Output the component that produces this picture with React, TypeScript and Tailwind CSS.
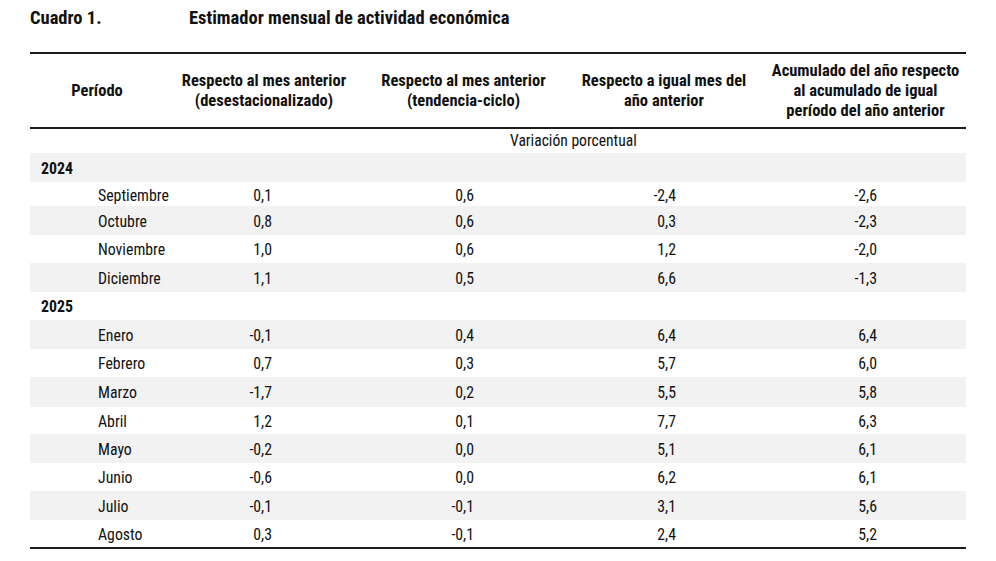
import React from "react";

type Row =
  | { kind: "year"; label: string; cls: string }
  | { kind: "month"; label: string; v: [string, string, string, string]; cls: string };

const rows: Row[] = [
  { kind: "year", label: "2024", cls: "h-[29px] bg-[#f2f2f2]" },
  { kind: "month", label: "Septiembre", v: ["0,1", "0,6", "-2,4", "-2,6"], cls: "h-[24px] bg-white" },
  { kind: "month", label: "Octubre", v: ["0,8", "0,6", "0,3", "-2,3"], cls: "h-[29px] bg-[#f2f2f2]" },
  { kind: "month", label: "Noviembre", v: ["1,0", "0,6", "1,2", "-2,0"], cls: "h-[28px] bg-white" },
  { kind: "month", label: "Diciembre", v: ["1,1", "0,5", "6,6", "-1,3"], cls: "h-[29px] bg-[#f2f2f2]" },
  { kind: "year", label: "2025", cls: "h-[28px] bg-white" },
  { kind: "month", label: "Enero", v: ["-0,1", "0,4", "6,4", "6,4"], cls: "h-[29px] bg-[#f2f2f2]" },
  { kind: "month", label: "Febrero", v: ["0,7", "0,3", "5,7", "6,0"], cls: "h-[28px] bg-white" },
  { kind: "month", label: "Marzo", v: ["-1,7", "0,2", "5,5", "5,8"], cls: "h-[30px] bg-[#f2f2f2]" },
  { kind: "month", label: "Abril", v: ["1,2", "0,1", "7,7", "6,3"], cls: "h-[27px] bg-white" },
  { kind: "month", label: "Mayo", v: ["-0,2", "0,0", "5,1", "6,1"], cls: "h-[29px] bg-[#f2f2f2]" },
  { kind: "month", label: "Junio", v: ["-0,6", "0,0", "6,2", "6,1"], cls: "h-[28px] bg-white" },
  { kind: "month", label: "Julio", v: ["-0,1", "-0,1", "3,1", "5,6"], cls: "h-[29px] bg-[#f2f2f2]" },
  { kind: "month", label: "Agosto", v: ["0,3", "-0,1", "2,4", "5,2"], cls: "h-[27px] bg-white" },
];

const GRID = "grid grid-cols-[67px_67px_200px_199px_202px_201px]";

export default function App() {
  return (
    <div className="w-[996px] h-[561px] bg-white px-[30px] text-[#111] font-['Roboto_Condensed','Roboto',sans-serif] font-stretch-condensed">
      <div className="h-[36px] flex items-center pt-[2px] font-bold text-[18.5px]">
        <div className="w-[159px]">Cuadro 1.</div>
        <div>Estimador mensual de actividad económica</div>
      </div>
      <div className="mt-[16px] w-[936px]">
        <div className={`${GRID} border-t-2 border-b-2 border-[#1c1c1c] h-[77px] font-bold text-[16.5px] leading-[20px]`}>
          <div className="col-span-2 flex items-center justify-center">Período</div>
          <div className="flex items-center justify-center text-center">
            Respecto al mes anterior
            <br />
            (desestacionalizado)
          </div>
          <div className="flex items-center justify-center text-center">
            Respecto al mes anterior
            <br />
            (tendencia-ciclo)
          </div>
          <div className="flex items-center justify-center text-center">
            Respecto a igual mes del
            <br />
            año anterior
          </div>
          <div className="flex items-center justify-center text-center">
            Acumulado del año respecto
            <br />
            al acumulado de igual
            <br />
            período del año anterior
          </div>
        </div>
        <div className="h-[24px] flex items-center pl-[480px] pt-[1px] text-[15.6px]">Variación porcentual</div>
        <div className="border-b-2 border-[#1c1c1c] text-[15.8px]">
          {rows.map((r, i) => (
            <div key={i} className={`${GRID} items-center pt-[2px] ${r.cls}`}>
              {r.kind === "year" ? (
                <div className="col-span-6 pl-[11px] font-bold">{r.label}</div>
              ) : (
                <>
                  <div />
                  <div className="pl-[1px] whitespace-nowrap">{r.label}</div>
                  <div className="text-right pr-[92px]">{r.v[0]}</div>
                  <div className="text-right pr-[89px]">{r.v[1]}</div>
                  <div className="text-right pr-[89px]">{r.v[2]}</div>
                  <div className="text-right pr-[89px]">{r.v[3]}</div>
                </>
              )}
            </div>
          ))}
        </div>
      </div>
    </div>
  );
}
